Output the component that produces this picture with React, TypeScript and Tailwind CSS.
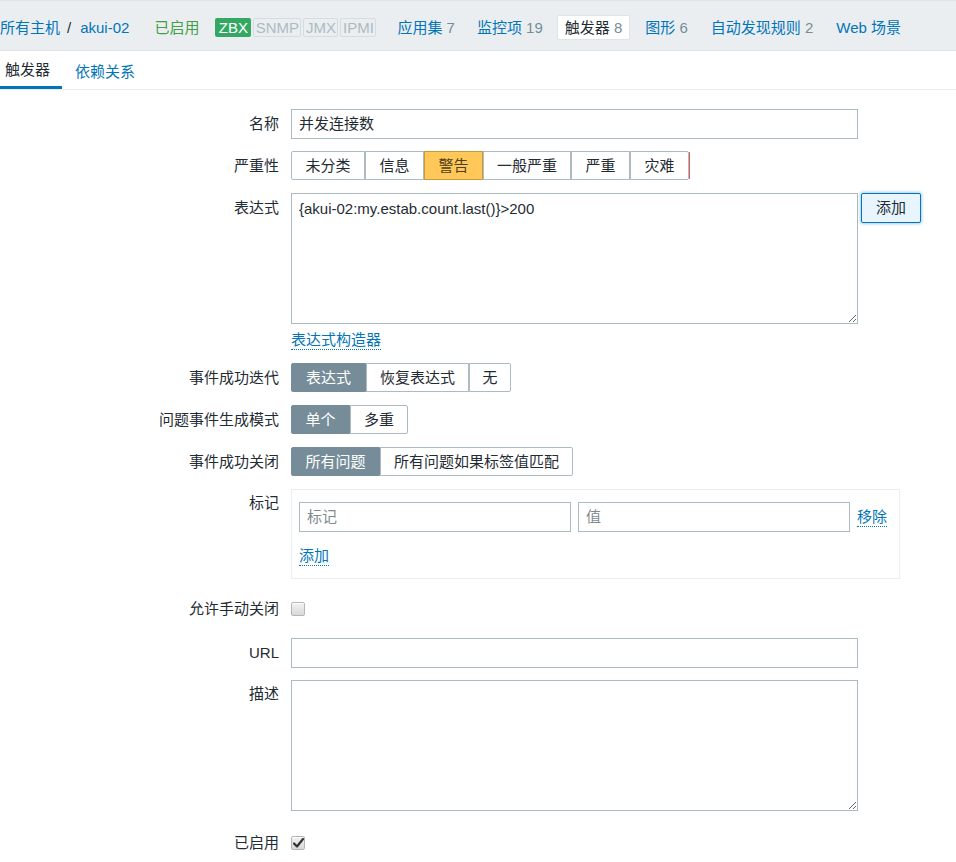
import React from "react";

function Label({ children, className = "" }: { children: React.ReactNode; className?: string }) {
  return <div className={`w-[279px] shrink-0 text-right ${className}`}>{children}</div>;
}

function Seg({
  items,
}: {
  items: { t: string; w: string; sel?: boolean; warn?: boolean }[];
}) {
  return (
    <div className="flex">
      {items.map((it, i) => (
        <div
          key={i}
          className={`${it.w} h-[29px] flex items-center justify-center border ${
            i === 0 ? "rounded-l-[2px]" : ""
          } ${i === items.length - 1 ? "rounded-r-[2px]" : ""} ${
            it.sel
              ? "bg-[#768d99] border-[#768d99] text-white"
              : it.warn
              ? "bg-[#ffc859] border-[#c99a3a] text-[#4d4020]"
              : "bg-white border-[#acbbc2] text-[#1f2c33]"
          }`}
        >
          {it.t}
        </div>
      ))}
    </div>
  );
}

function Checkbox({ checked }: { checked?: boolean }) {
  return (
    <div className="w-[14px] h-[14px] rounded-[2px] border border-[#b5b5b5] bg-gradient-to-b from-[#f2f2f2] to-[#d9d9d9] shadow-[inset_0_1px_0_#fff] flex items-center justify-center">
      {checked && (
        <svg width="11" height="10" viewBox="0 0 11 10">
          <path d="M1 5.5 L4 8.5 L10 1" stroke="#333" strokeWidth="2.2" fill="none" strokeLinecap="round" strokeLinejoin="round" />
        </svg>
      )}
    </div>
  );
}

export default function App() {
  return (
    <div className="w-[956px] h-[862px] bg-white text-[15px] leading-[18px] text-[#1f2c33] font-[Liberation_Sans,Arial,Noto_Sans_CJK_SC,sans-serif] overflow-hidden">
      {/* Header */}
      <div className="h-[51px] pt-[4px] bg-[#ebeef1] border-t border-b border-[#dfe4e7] flex items-center">
        <span className="text-[#0275b8]">所有主机</span>
        <span className="ml-[7px] text-[#1f2c33]">/</span>
        <span className="ml-[9px] text-[#0275b8]">akui-02</span>
        <span className="ml-[25px] text-[#429e47]">已启用</span>
        <div className="ml-[16px] flex gap-[2px]">
          <span className="w-[36px] h-[19px] text-center leading-[19px] bg-[#34a863] text-white rounded-[2px]">ZBX</span>
          <span className="w-[48px] h-[19px] text-center leading-[17px] bg-[#ebeef1] border border-[#d5dde1] text-[#acbbc2] rounded-[2px]">SNMP</span>
          <span className="w-[35px] h-[19px] text-center leading-[17px] bg-[#ebeef1] border border-[#d5dde1] text-[#acbbc2] rounded-[2px]">JMX</span>
          <span className="w-[36px] h-[19px] text-center leading-[17px] bg-[#ebeef1] border border-[#d5dde1] text-[#acbbc2] rounded-[2px]">IPMI</span>
        </div>
        <span className="ml-[21px] text-[#0275b8]">
          应用集 <span className="text-[#768d99]">7</span>
        </span>
        <span className="ml-[22px] text-[#0275b8]">
          监控项 <span className="text-[#768d99]">19</span>
        </span>
        <span className="ml-[14px] h-[25px] px-[7px] flex items-center bg-white border border-[#dfe4e7] rounded-[2px] text-[#1f2c33]">
          触发器&nbsp;<span className="text-[#768d99]">8</span>
        </span>
        <span className="ml-[15px] text-[#0275b8]">
          图形 <span className="text-[#768d99]">6</span>
        </span>
        <span className="ml-[23px] text-[#0275b8]">
          自动发现规则 <span className="text-[#768d99]">2</span>
        </span>
        <span className="ml-[23px] text-[#0275b8]">Web 场景</span>
      </div>

      {/* Tabs */}
      <div className="h-[39px] border-b border-[#ebeef1] flex items-end">
        <div className="w-[62px] h-[38px] flex items-center pl-[5px] border-b-[3px] border-[#0275b8] pt-[3px]">触发器</div>
        <div className="ml-[13px] h-[38px] flex items-center pt-[3px] text-[#0275b8]">依赖关系</div>
      </div>

      {/* Form */}
      <div className="flex flex-col">
        <div className="mt-[19px] flex items-center">
          <Label>名称</Label>
          <div className="ml-[12px] w-[567px] h-[30px] border border-[#acbbc2] px-[7px] flex items-center">并发连接数</div>
        </div>

        <div className="mt-[12px] flex items-center">
          <Label>严重性</Label>
          <div className="ml-[12px] flex items-center">
            <Seg
              items={[
                { t: "未分类", w: "w-[74px]" },
                { t: "信息", w: "w-[59px]" },
                { t: "警告", w: "w-[59px]", warn: true },
                { t: "一般严重", w: "w-[88px]" },
                { t: "严重", w: "w-[59px]" },
                { t: "灾难", w: "w-[59px]" },
              ]}
            />
            <div className="w-px h-[27px] bg-[#e45959]" />
          </div>
        </div>

        <div className="mt-[13px] flex items-start">
          <Label className="pt-[6px]">表达式</Label>
          <textarea
            className="ml-[12px] w-[567px] h-[131px] border border-[#acbbc2] px-[7px] pt-[6px] outline-none resize-y text-[15px] leading-[18px]"
            defaultValue="{akui-02:my.estab.count.last()}>200"
          />
          <div className="ml-[3px] w-[60px] h-[30px] flex items-center justify-center bg-[#e8f5ff] border border-[#0275b8] rounded-[2px] shadow-[0_0_3px_1px_rgba(2,117,184,0.35)]">
            添加
          </div>
        </div>

        <div className="mt-[6px] flex">
          <Label>{""}</Label>
          <span className="ml-[12px] leading-[19px] text-[#0275b8] border-b border-dotted border-[#0275b8]">表达式构造器</span>
        </div>

        <div className="mt-[13px] flex items-center">
          <Label>事件成功迭代</Label>
          <div className="ml-[12px]">
            <Seg
              items={[
                { t: "表达式", w: "w-[75px]", sel: true },
                { t: "恢复表达式", w: "w-[103px]" },
                { t: "无", w: "w-[42px]" },
              ]}
            />
          </div>
        </div>

        <div className="mt-[13px] flex items-center">
          <Label>问题事件生成模式</Label>
          <div className="ml-[12px]">
            <Seg
              items={[
                { t: "单个", w: "w-[59px]", sel: true },
                { t: "多重", w: "w-[58px]" },
              ]}
            />
          </div>
        </div>

        <div className="mt-[13px] flex items-center">
          <Label>事件成功关闭</Label>
          <div className="ml-[12px]">
            <Seg
              items={[
                { t: "所有问题", w: "w-[89px]", sel: true },
                { t: "所有问题如果标签值匹配", w: "w-[193px]" },
              ]}
            />
          </div>
        </div>

        <div className="mt-[13px] flex items-start">
          <Label className="pt-[5px]">标记</Label>
          <div className="ml-[12px] w-[609px] h-[90px] border border-[#ebeef1] px-[7px] pt-[12px]">
            <div className="flex items-center">
              <div className="w-[272px] h-[30px] border border-[#acbbc2] px-[7px] flex items-center text-[#7f8a90]">标记</div>
              <div className="ml-[7px] w-[272px] h-[30px] border border-[#acbbc2] px-[7px] flex items-center text-[#7f8a90]">值</div>
              <span className="ml-[7px] leading-[19px] text-[#0275b8] border-b border-dotted border-[#0275b8]">移除</span>
            </div>
            <div className="mt-[14px] flex">
              <span className="leading-[19px] text-[#0275b8] border-b border-dotted border-[#0275b8]">添加</span>
            </div>
          </div>
        </div>

        <div className="mt-[16px] h-[28px] flex items-center">
          <Label>允许手动关闭</Label>
          <div className="ml-[12px]">
            <Checkbox />
          </div>
        </div>

        <div className="mt-[15px] flex items-center">
          <Label>URL</Label>
          <div className="ml-[12px] w-[567px] h-[30px] border border-[#acbbc2]" />
        </div>

        <div className="mt-[12px] flex items-start">
          <Label className="pt-[5px]">描述</Label>
          <textarea className="ml-[12px] w-[567px] h-[131px] border border-[#acbbc2] px-[7px] pt-[6px] outline-none resize-y" />
        </div>

        <div className="mt-[18px] h-[28px] flex items-center">
          <Label>已启用</Label>
          <div className="ml-[12px]">
            <Checkbox checked />
          </div>
        </div>
      </div>
    </div>
  );
}
